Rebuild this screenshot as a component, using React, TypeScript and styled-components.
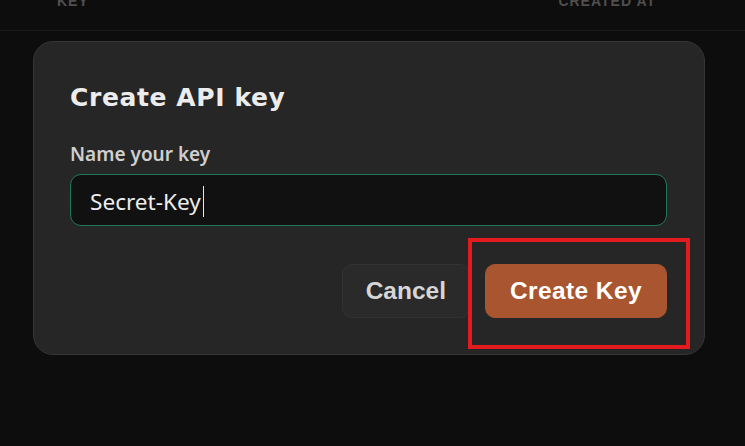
import React from "react";
import styled, { createGlobalStyle } from "styled-components";

const Global = createGlobalStyle`
  html, body { margin: 0; padding: 0; background: #0d0d0d; }
  body { width: 745px; height: 446px; overflow: hidden; font-family: "Noto Sans", sans-serif; }
`;

const Page = styled.div`
  width: 745px;
  height: 446px;
  background: #0d0d0d;
  display: flex;
  flex-direction: column;
`;

const TableHead = styled.div`
  height: 30px;
  border-bottom: 1px solid #1b1b1b;
  display: flex;
  justify-content: space-between;
  padding: 0 89px 0 57px;
  overflow: hidden;
`;

const HeadCell = styled.span`
  margin-top: -6px;
  font-family: "Liberation Sans", Arial, sans-serif;
  font-weight: 700;
  font-size: 14px;
  line-height: 14px;
  letter-spacing: 1px;
  color: #4f4f4f;
  height: 14px;
`;

const Modal = styled.div`
  position: relative;
  margin: 10px 0 0 33px;
  width: 672px;
  box-sizing: border-box;
  background: #262626;
  border: 1px solid #353535;
  border-radius: 20px;
  padding: 41px 37px 36px 36px;
  display: flex;
  flex-direction: column;
`;

const Title = styled.h2`
  margin: 0;
  font-family: "DejaVu Sans", sans-serif;
  font-weight: 700;
  font-size: 25px;
  line-height: 30px;
  color: #ececec;
  letter-spacing: 0.6px;
`;

const Label = styled.label`
  margin-top: 29px;
  font-family: "Noto Sans", sans-serif;
  font-weight: 600;
  font-size: 19px;
  line-height: 25px;
  color: #cfcfcf;
`;

const Field = styled.div`
  margin-top: 7px;
  height: 52px;
  box-sizing: border-box;
  background: #111111;
  border: 1px solid #1d7a55;
  border-radius: 11px;
  padding: 3px 19px 0;
  display: flex;
  align-items: center;
  font-family: "Noto Sans", sans-serif;
  font-size: 22.6px;
  color: #ededed;
`;

const Caret = styled.span`
  display: inline-block;
  width: 1px;
  height: 31px;
  margin-left: 2px;
  background: #e8e8e8;
`;

const Actions = styled.div`
  margin-top: 38px;
  display: flex;
  justify-content: flex-end;
  gap: 15px;
`;

const Button = styled.button<{ $primary?: boolean }>`
  height: 54px;
  box-sizing: border-box;
  padding: 0 ${(p) => (p.$primary ? "22px" : "23px")};
  min-width: ${(p) => (p.$primary ? "182px" : "128px")};
  border-radius: 10px;
  border: 1px solid ${(p) => (p.$primary ? "#a9552f" : "#323232")};
  background: ${(p) => (p.$primary ? "#a9552f" : "#2a2a2a")};
  color: ${(p) => (p.$primary ? "#ffffff" : "#d6d6d6")};
  font-family: "Liberation Sans", Arial, sans-serif;
  font-weight: 700;
  font-size: 24.5px;
  letter-spacing: ${(p) => (p.$primary ? "0.4px" : "0")};
  cursor: pointer;
`;

const Highlight = styled.div`
  position: absolute;
  left: 434px;
  top: 196px;
  width: 222px;
  height: 111px;
  box-sizing: border-box;
  border: 4px solid #e31b1f;
  pointer-events: none;
`;

export default function App() {
  return (
    <Page>
      <Global />
      <TableHead>
        <HeadCell>KEY</HeadCell>
        <HeadCell>CREATED AT</HeadCell>
      </TableHead>
      <Modal>
        <Title>Create API key</Title>
        <Label>Name your key</Label>
        <Field>
          Secret-Key
          <Caret />
        </Field>
        <Actions>
          <Button>Cancel</Button>
          <Button $primary>Create Key</Button>
        </Actions>
        <Highlight />
      </Modal>
    </Page>
  );
}
